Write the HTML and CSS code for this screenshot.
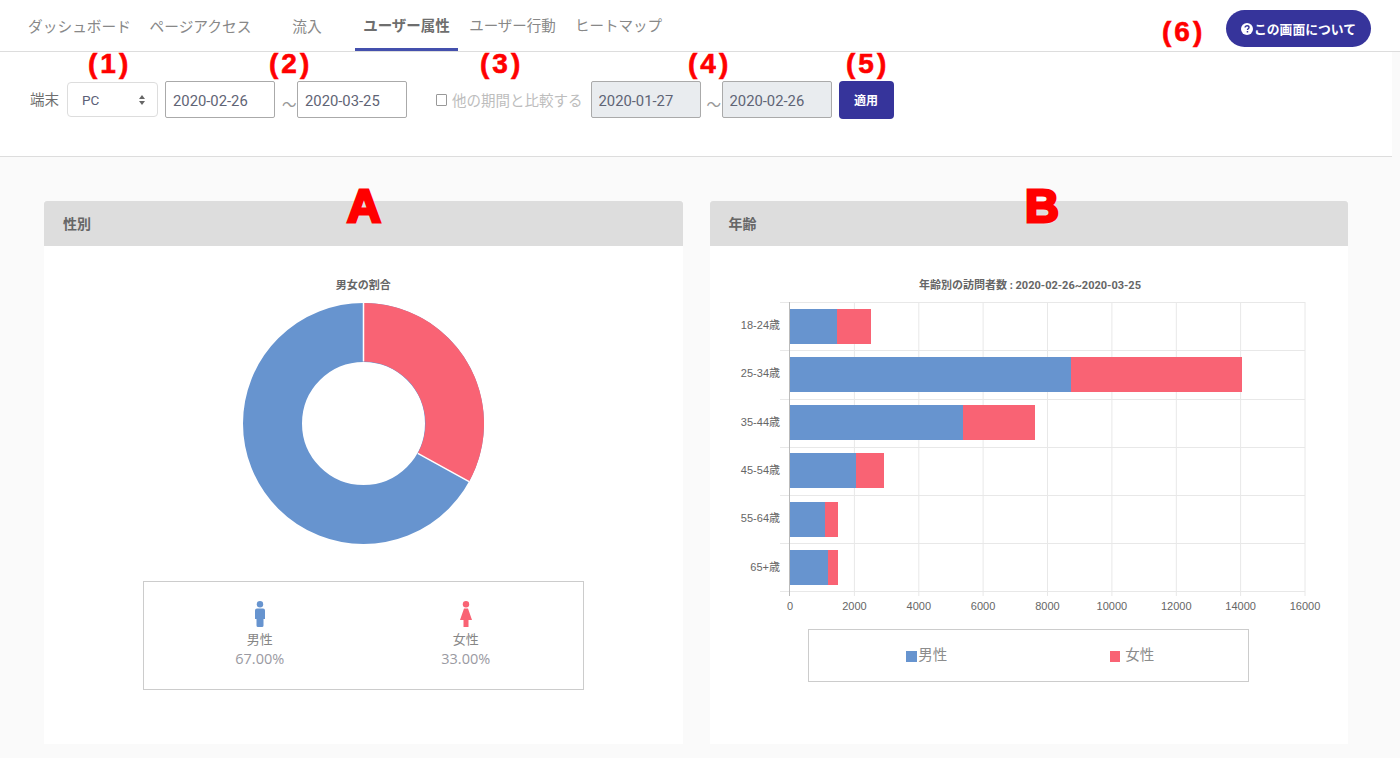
FILE: index.html
```html
<!DOCTYPE html>
<html lang="ja">
<head>
    <meta charset="UTF-8">
    <meta name="viewport" content="width=device-width, initial-scale=1.0">
    <title>ユーザー属性</title>
    <link rel="stylesheet" href="styles.css">
</head>
<body>
    <div class="page">
        <header class="topbar">
            <nav class="tabs">
                <a class="tab">ダッシュボード</a>
                <a class="tab">ページアクセス</a>
                <a class="tab tab-short">流入</a>
                <a class="tab active">ユーザー属性</a>
                <a class="tab">ユーザー行動</a>
                <a class="tab">ヒートマップ</a>
            </nav>
            <button class="about-btn">
                <svg class="about-icon" viewBox="0 0 12 12">
                    <circle cx="6" cy="6" r="6" fill="#fff"/>
                    <path d="M4.1 4.6c0-1.1.9-1.8 2-1.8s1.9.7 1.9 1.6c0 1.4-1.5 1.4-1.5 2.6" fill="none" stroke="#36349b" stroke-width="1.4"/>
                    <rect x="5.7" y="8" width="1.5" height="1.5" fill="#36349b"/>
                </svg>この画面について
            </button>
        </header>

        <section class="filters">
            <span class="filter-label">端末</span>
            <div class="select-wrap">
                <select class="device">
                    <option>PC</option>
                </select>
            </div>
            <input class="date" type="text" value="2020-02-26">
            <span class="tilde">～</span>
            <input class="date" type="text" value="2020-03-25">
            <label class="compare"><span class="checkbox"></span>他の期間と比較する</label>
            <input class="date" type="text" value="2020-01-27" disabled>
            <span class="tilde">～</span>
            <input class="date" type="text" value="2020-02-26" disabled>
            <button class="apply">適用</button>
        </section>

        <main class="cards">
            <section class="card">
                <h2 class="card-title">性別</h2>
                <div class="card-body gender-body">
                    <div class="chart-title">男女の割合</div>
                    <svg class="donut" viewBox="0 0 241 241">
                        <circle cx="120.5" cy="120.5" r="91" fill="none" stroke="#6794cf" stroke-width="59"/>
                        <path d="M120.500 0A120.500 120.500 0 0 1 226.100 178.600L174.800 150.400A62 62 0 0 0 120.500 58.500Z" fill="#f96374"/>
                        <path d="M120.500 0V58.500M226.100 178.600L174.800 150.400" stroke="#fff" stroke-width="1.5"/>
                    </svg>
                    <div class="gender-legend">
                        <div class="gender-item">
                            <svg class="person" viewBox="0 0 20 26">
                                <circle cx="10" cy="3.2" r="3.2" fill="#6794cf"/>
                                <path d="M7 7.500h6a2 2 0 0 1 2 2V18h-1.500v6.500a1.500 1.500 0 0 1-1.500 1.500H8a1.500 1.500 0 0 1-1.500-1.500V18H5V9.500a2 2 0 0 1 2-2Z" fill="#6794cf"/>
                            </svg>
                            <span class="gender-name">男性</span>
                            <span class="gender-rate">67.00%</span>
                        </div>
                        <div class="gender-item">
                            <svg class="person" viewBox="0 0 20 26">
                                <circle cx="10" cy="3.2" r="3.2" fill="#f96374"/>
                                <path d="M8 7.500h4l4 11.500h-3.500v7h-5v-7H4Z" fill="#f96374"/>
                            </svg>
                            <span class="gender-name">女性</span>
                            <span class="gender-rate">33.00%</span>
                        </div>
                    </div>
                </div>
            </section>

            <section class="card">
                <h2 class="card-title">年齢</h2>
                <div class="card-body age-body">
                    <svg class="bars" viewBox="710 276 638 340">
                        <text class="bars-title" x="1030" y="289">年齢別の訪問者数 : 2020-02-26~2020-03-25</text>

                        <g class="grid">
                            <path d="M854.400 302V596M918.800 302V596M983.100 302V596M1047.500 302V596M1111.900 302V596M1176.300 302V596M1240.600 302V596M1305 302V596"/>
                            <path d="M780 302.500H1305M780 350.500H1305M780 399.500H1305M780 447.500H1305M780 495.500H1305M780 543.500H1305M780 591.500H1305"/>
                        </g>

                        <g class="bar-male">
                            <rect x="790" y="309" width="47" height="35"/>
                            <rect x="790" y="357" width="281" height="35"/>
                            <rect x="790" y="405" width="173" height="35"/>
                            <rect x="790" y="453" width="66" height="35"/>
                            <rect x="790" y="502" width="35" height="35"/>
                            <rect x="790" y="550" width="38" height="35"/>
                        </g>
                        <g class="bar-female">
                            <rect x="837" y="309" width="34" height="35"/>
                            <rect x="1071" y="357" width="171" height="35"/>
                            <rect x="963" y="405" width="72" height="35"/>
                            <rect x="856" y="453" width="28" height="35"/>
                            <rect x="825" y="502" width="13" height="35"/>
                            <rect x="828" y="550" width="10" height="35"/>
                        </g>
                        <path class="axis" d="M789.500 302V596"/>

                        <g class="age-labels">
                            <text x="780" y="329">18-24歳</text>
                            <text x="780" y="377">25-34歳</text>
                            <text x="780" y="426">35-44歳</text>
                            <text x="780" y="474">45-54歳</text>
                            <text x="780" y="522">55-64歳</text>
                            <text x="780" y="571">65+歳</text>
                        </g>
                        <g class="count-labels">
                            <text x="790" y="610">0</text>
                            <text x="854.400" y="610">2000</text>
                            <text x="918.800" y="610">4000</text>
                            <text x="983.100" y="610">6000</text>
                            <text x="1047.500" y="610">8000</text>
                            <text x="1111.900" y="610">10000</text>
                            <text x="1176.300" y="610">12000</text>
                            <text x="1240.600" y="610">14000</text>
                            <text x="1305" y="610">16000</text>
                        </g>
                    </svg>
                    <div class="age-legend">
                        <span class="age-key key-male"><i class="swatch swatch-male"></i>男性</span>
                        <span class="age-key key-female"><i class="swatch swatch-female"></i>女性</span>
                    </div>
                </div>
            </section>
        </main>

        <!-- 説明用の注釈 -->
        <span class="mark mark-1">(1)</span>
        <span class="mark mark-2">(2)</span>
        <span class="mark mark-3">(3)</span>
        <span class="mark mark-4">(4)</span>
        <span class="mark mark-5">(5)</span>
        <span class="mark mark-6">(6)</span>
        <span class="letter letter-a">A</span>
        <span class="letter letter-b">B</span>
    </div>
</body>
</html>
```

FILE: styles.css
```css
* {
    margin: 0;
    padding: 0;
    box-sizing: border-box;
}

html, body {
    height: 100%;
    overflow: hidden;
}

body {
    background: #fafafa;
    color: #666;
    font-family: Roboto, "Noto Sans CJK JP", sans-serif;
}

.page {
    position: relative;
    height: 758px;
}

/* top tabs */
.topbar {
    display: flex;
    justify-content: space-between;
    height: 52px;
    padding: 0 29px 0 20px;
    background: #fff;
    border-bottom: 1px solid #ddd;
}

.tabs {
    display: flex;
    gap: 3px;
}

.tab {
    width: 119px;
    height: 51px;
    padding-top: 16px;
    text-align: center;
    font-size: 14.7px;
    line-height: 22px;
    color: #888;
    white-space: nowrap;
}

.tab:nth-child(2) {
    margin-left: -1px;
    margin-right: 1px;
}

.tab-short {
    width: 88px;
    margin-left: -1px;
    margin-right: 1px;
}

.tab:nth-child(n+4) {
    width: 103px;
    font-size: 14.5px;
}

.tab.active {
    font-weight: 700;
    color: #6e6e6e;
    border-bottom: 3px solid #4450ad;
}

.about-btn {
    display: flex;
    align-items: center;
    justify-content: center;
    width: 145px;
    height: 37px;
    margin-top: 10px;
    border: none;
    border-radius: 19px;
    background: #36349b;
    color: #fff;
    font-family: inherit;
    font-size: 12.800px;
    font-weight: 700;
}

.about-icon {
    width: 12px;
    height: 12px;
    margin-right: 1px;
}

/* filter row */
.filters {
    display: flex;
    align-items: flex-start;
    width: 1392px;
    height: 105px;
    padding: 29px 0 0 30px;
    background: #fff;
    border-bottom: 1px solid #ddd;
}

.filter-label {
    width: 37px;
    margin-top: 10px;
    font-size: 14.500px;
    line-height: 20px;
    color: #6e6e6e;
}

.select-wrap {
    position: relative;
    width: 91px;
    height: 35px;
    margin: 1px 7px 0 0;
}

.select-wrap::before,
.select-wrap::after {
    content: "";
    position: absolute;
    left: 72px;
    border-left: 3.500px solid transparent;
    border-right: 3.500px solid transparent;
}

.select-wrap::before {
    top: 13px;
    border-bottom: 4px solid #666;
}

.select-wrap::after {
    top: 19px;
    border-top: 4px solid #666;
}

.device {
    width: 100%;
    height: 100%;
    padding-left: 14px;
    appearance: none;
    background: #fff;
    border: 1px solid #ddd;
    border-radius: 4px;
    color: #5c5f78;
    font-family: inherit;
    font-size: 13.500px;
}

.date {
    width: 110px;
    height: 37px;
    padding: 2px 0 0 7px;
    background: #fff;
    border: 1px solid #aaa;
    border-radius: 2px;
    color: #5f6475;
    font-family: inherit;
    font-size: 14.800px;
}

.date:disabled {
    background: #e9ecef;
    color: #5f6475;
}

.tilde {
    width: 22px;
    margin-top: 14px;
    padding-left: 7px;
    font-size: 14.500px;
    line-height: 22px;
    color: #999;
    white-space: nowrap;
}

.date:disabled + .tilde {
    width: 21px;
    padding-left: 6px;
}

.compare {
    display: flex;
    align-items: center;
    height: 37px;
    margin: 0 8px 0 29px;
    font-size: 14.500px;
    color: #bdbdbd;
}

.checkbox {
    width: 11px;
    height: 12px;
    margin-right: 5px;
    border: 1px solid #999;
    border-radius: 1px;
}

.apply {
    width: 55px;
    height: 38px;
    margin-left: 7px;
    padding-bottom: 2px;
    border: none;
    border-radius: 4px;
    background: #36349b;
    color: #fff;
    font-family: inherit;
    font-size: 12px;
    font-weight: 700;
}

/* cards */
.cards {
    display: flex;
    gap: 27px;
    width: 1392px;
    padding: 44px 44px 0;
}

.card {
    flex: 1;
    height: 543px;
    background: #fff;
    display: flex;
    flex-direction: column;
}

.card-title {
    height: 45px;
    padding-left: 19px;
    background: #ddd;
    border-radius: 3px 3px 0 0;
    font-size: 14px;
    font-weight: 700;
    line-height: 46px;
    color: #666;
}

.card-body {
    flex: 1;
    display: flex;
    flex-direction: column;
    align-items: center;
}

.gender-body {
    padding-top: 32px;
}

.chart-title {
    height: 16px;
    margin-bottom: 9px;
    font-size: 11px;
    font-weight: 700;
    line-height: 16px;
    color: #666;
}

.donut {
    width: 241px;
    height: 241px;
}

.gender-legend {
    display: flex;
    justify-content: space-between;
    width: 441px;
    height: 109px;
    margin-top: 37px;
    padding: 19px 92px 0 91px;
    border: 1px solid #ccc;
}

.gender-item {
    display: flex;
    flex-direction: column;
    align-items: center;
    width: 50px;
}

.person {
    flex: none;
    width: 20px;
    height: 26px;
}

.gender-name {
    margin-top: 3px;
    font-size: 13px;
    line-height: 20px;
    color: #868686;
}

.gender-rate {
    font-family: "Open Sans", sans-serif;
    font-size: 14.500px;
    line-height: 18px;
    color: #9a9aa2;
    white-space: nowrap;
}

/* age chart */
.age-body {
    padding-top: 30px;
}

.bars {
    width: 638px;
    height: 340px;
    font-family: "Liberation Sans", "Noto Sans CJK JP", sans-serif;
    font-size: 11px;
}

.bars-title {
    text-anchor: middle;
    font-family: Roboto, "Noto Sans CJK JP", sans-serif;
    font-weight: 700;
    fill: #666;
}

.grid {
    fill: none;
    stroke: #e8e8e8;
    stroke-width: 1;
}

.axis {
    fill: none;
    stroke: #bbb;
}

.bar-male {
    fill: #6794cf;
}

.bar-female {
    fill: #f96374;
}

.age-labels text {
    text-anchor: end;
    fill: #666;
}

.count-labels text {
    text-anchor: middle;
    fill: #666;
}

.age-legend {
    display: flex;
    width: 441px;
    height: 53px;
    margin-top: 13px;
    padding-top: 16px;
    border: 1px solid #ccc;
    font-size: 14.500px;
    line-height: 20px;
    color: #8c8c8c;
}

.age-key {
    display: flex;
    align-items: center;
    height: 20px;
}

.key-male {
    margin-left: 97px;
}

.key-female {
    margin-left: 163px;
}

.swatch {
    display: block;
    width: 11px;
    height: 11px;
    margin-right: 1px;
}

.swatch-male {
    background: #6794cf;
}

.swatch-female {
    width: 10px;
    margin-right: 5px;
    background: #f96374;
}

/* annotations on top of the screenshot */
.mark {
    position: absolute;
    top: 49px;
    font-family: "Liberation Sans", sans-serif;
    font-size: 28px;
    font-weight: 700;
    line-height: 30px;
    letter-spacing: 3px;
    color: #f00;
    -webkit-text-stroke: .6px #f00;
    text-shadow: 0 0 2px #fff, 0 0 2px #fff;
}

.mark-1 { left: 88px; }
.mark-2 { left: 269px; }
.mark-3 { left: 480px; }
.mark-4 { left: 688px; }
.mark-5 { left: 846px; }
.mark-6 { left: 1162px; top: 17px; }

.letter {
    position: absolute;
    top: 178px;
    font-family: "Liberation Sans", sans-serif;
    font-size: 47px;
    font-weight: 700;
    line-height: 55px;
    color: #f00;
    -webkit-text-stroke: 3px #f00;
    text-shadow: 0 0 3px #fff, 0 0 3px #fff, 0 0 3px #fff;
}

.letter-a { left: 347px; }
.letter-b { left: 1025px; }
```
